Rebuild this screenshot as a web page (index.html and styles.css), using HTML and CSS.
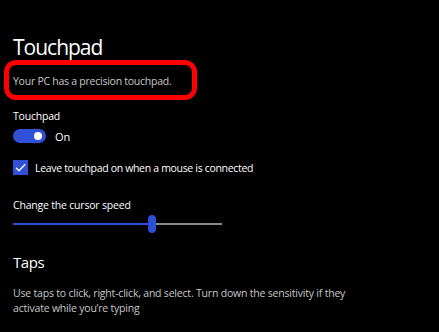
FILE: index.html
```html
<!DOCTYPE html>
<html>
<head>
<meta charset="utf-8">
<link rel="stylesheet" href="styles.css">
</head>
<body>
<main class="page">
  <h1 class="title">Touchpad</h1>
  <div class="highlight">
    <p class="note">Your PC has a precision touchpad.</p>
  </div>
  <div class="label">Touchpad</div>
  <div class="toggle-row">
    <span class="toggle"><span class="knob"></span></span>
    <span class="toggle-text">On</span>
  </div>
  <div class="check-row">
    <span class="checkbox">
      <svg width="15" height="15" viewBox="0 0 15 15"><path d="M3 7.8 L6 10.8 L12.2 4.2" fill="none" stroke="#fff" stroke-width="1.3"/></svg>
    </span>
    <span class="check-text">Leave touchpad on when a mouse is connected</span>
  </div>
  <div class="label speed-label">Change the cursor speed</div>
  <div class="slider">
    <span class="fill"></span>
    <span class="thumb"></span>
    <span class="rest"></span>
  </div>
  <h2 class="subtitle">Taps</h2>
  <p class="desc">Use taps to click, right-click, and select. Turn down the sensitivity if they activate while you’re typing</p>
</main>
</body>
</html>
```
FILE: styles.css
```css
html, body {
  margin: 0;
  padding: 0;
  background: #000;
}
body {
  font-family: "Open Sans", "Noto Sans", sans-serif;
  color: #fff;
  width: 439px;
  height: 332px;
  overflow: hidden;
}
.page {
  padding: 35px 0 0 13px;
}
.title {
  margin: 0;
  font-size: 21px;
  font-weight: 400;
  line-height: 24px;
  letter-spacing: -1px;
}
.highlight {
  margin: 1px 0 0 -9px;
  width: 179px;
  height: 30px;
  border: 5px solid #ff0000;
  border-radius: 12px;
  padding-left: 4px;
  display: flex;
  align-items: center;
}
.note {
  margin: 2px 0 0;
  font-size: 10.5px;
  color: #c8c8c8;
  letter-spacing: -0.25px;
}
.label {
  margin-top: 9px;
  font-size: 10.5px;
  line-height: 14px;
  letter-spacing: -0.2px;
}
.toggle-row {
  margin-top: 6px;
  display: flex;
  align-items: center;
  gap: 9px;
  height: 14px;
}
.toggle {
  width: 33px;
  height: 14px;
  border-radius: 7px;
  background: #3050d8;
  display: flex;
  align-items: center;
  justify-content: flex-end;
  padding-right: 4px;
  box-sizing: border-box;
}
.knob {
  width: 8px;
  height: 8px;
  border-radius: 50%;
  background: #fff;
}
.toggle-text {
  font-size: 11px;
}
.check-row {
  margin-top: 17px;
  display: flex;
  align-items: center;
  gap: 7px;
}
.checkbox {
  width: 15px;
  height: 15px;
  background: #3050d8;
  display: flex;
}
.check-text {
  font-size: 10.5px;
  letter-spacing: -0.32px;
}
.speed-label {
  margin-top: 23px;
}
.slider {
  margin-top: 3px;
  width: 209px;
  height: 18px;
  display: flex;
  align-items: center;
}
.fill {
  width: 135px;
  height: 2px;
  background: #2c4fd8;
}
.thumb {
  width: 8px;
  height: 18px;
  border-radius: 4px;
  background: #2c4fd8;
}
.rest {
  flex: 1;
  height: 2px;
  background: #8a8a8a;
}
.subtitle {
  margin: 19px 0 0;
  font-size: 15px;
  font-weight: 400;
  line-height: 20px;
  letter-spacing: -0.4px;
}
.desc {
  margin: 14px 0 0;
  width: 345px;
  font-size: 10.5px;
  line-height: 15px;
  color: #c8c8c8;
  letter-spacing: -0.2px;
}
```
